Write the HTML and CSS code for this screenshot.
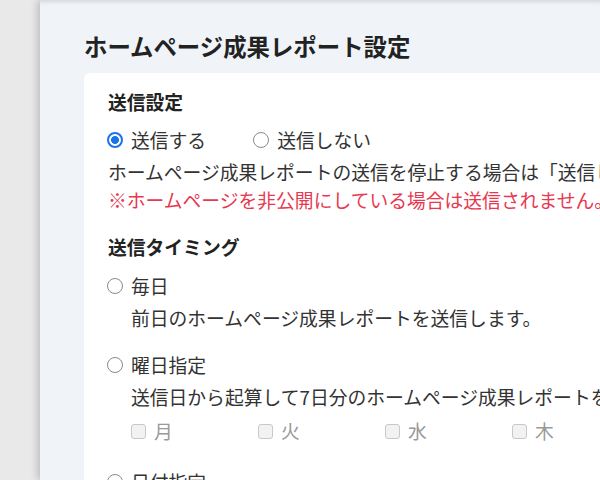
FILE: index.html
```html
<!DOCTYPE html>
<html lang="ja">
<head>
    <meta charset="UTF-8">
    <meta name="viewport" content="width=device-width, initial-scale=1.0">
    <title>ホームページ成果レポート設定</title>
    <link rel="stylesheet" href="styles.css">
</head>
<body>
    <div class="side"></div>
    <main class="main">
        <h1 class="page-title">ホームページ成果レポート設定</h1>
        <section class="card">
            <div class="group">
                <div class="group-title">送信設定</div>
                <div class="radio-row">
                    <label class="radio"><input type="radio" name="send" checked> 送信する</label>
                    <label class="radio"><input type="radio" name="send"> 送信しない</label>
                </div>
                <p class="note">ホームページ成果レポートの送信を停止する場合は「送信しない」を選択してください。</p>
                <p class="note warn">※ホームページを非公開にしている場合は送信されません。</p>
            </div>

            <div class="group timing">
                <div class="group-title">送信タイミング</div>
                <div class="option">
                    <label class="radio"><input type="radio" name="timing"> 毎日</label>
                    <p class="desc">前日のホームページ成果レポートを送信します。</p>
                </div>
                <div class="option">
                    <label class="radio"><input type="radio" name="timing"> 曜日指定</label>
                    <p class="desc">送信日から起算して7日分のホームページ成果レポートを送信します。</p>
                    <div class="days">
                        <label class="day"><input type="checkbox" disabled> 月</label>
                        <label class="day"><input type="checkbox" disabled> 火</label>
                        <label class="day"><input type="checkbox" disabled> 水</label>
                        <label class="day"><input type="checkbox" disabled> 木</label>
                        <label class="day"><input type="checkbox" disabled> 金</label>
                    </div>
                </div>
                <div class="option">
                    <label class="radio"><input type="radio" name="timing"> 日付指定</label>
                </div>
            </div>
        </section>
    </main>
</body>
</html>
```

FILE: styles.css
```css
body {
    font-family: "Noto Sans CJK JP", "Noto Sans", sans-serif;
    margin: 0;
    padding: 0;
    background-color: #e9e9e9;
    color: #333;
    display: flex;
    height: 480px;
    overflow: hidden;
    white-space: nowrap;
}

.side {
    width: 40px;
    flex-shrink: 0;
}

.main {
    flex: 1;
    min-width: 0;
    background: #f0f4f8;
    padding-top: 30px;
    box-shadow: -3px 0 7px rgba(0, 0, 0, 0.18), inset 0 5px 4px -3px rgba(0, 0, 0, 0.12);
    overflow: hidden;
}

.page-title {
    margin: 0 0 0 44px;
    font-size: 23.4px;
    line-height: 32px;
    font-weight: bold;
    color: #222;
}

.card {
    margin: 11px 0 0 44px;
    padding: 15px 0 0 24px;
    background: #fff;
    border-radius: 6px 0 0 0;
    height: 420px;
    font-size: 18.8px;
    line-height: 28px;
}

.group-title {
    font-weight: bold;
    color: #222;
}

.radio-row {
    display: flex;
    margin-top: 10px;
}

.radio {
    display: flex;
    align-items: center;
    margin-right: 48px;
}

.radio input {
    appearance: none;
    box-sizing: border-box;
    flex: none;
    width: 16px;
    height: 16px;
    margin: 0 8px 0 -1px;
    border: 1.5px solid #8a8a8a;
    border-radius: 50%;
    background: #fff;
}

.radio input:checked {
    border: 2px solid #1a73e8;
    background: radial-gradient(circle, #1a73e8 0 3.6px, #fff 4.3px);
}

.note {
    margin: 4px 0 0;
}

.note.warn {
    margin-top: 0;
    color: #e8384f;
}

.timing {
    margin-top: 19px;
}

.option {
    margin-top: 11px;
}

.option + .option {
    margin-top: 19px;
}

.desc {
    margin: 4px 0 0 23px;
}

.days {
    display: flex;
    margin: 6px 0 0 23px;
}

.day {
    display: flex;
    align-items: center;
    width: 127px;
    flex-shrink: 0;
    color: #999;
}

.day input {
    appearance: none;
    box-sizing: border-box;
    flex: none;
    width: 15px;
    height: 15px;
    margin: 0 8px 0 0;
    border: 1px solid #c8c8c8;
    border-radius: 3px;
    background: #f2f2f2;
}

.option:last-child {
    margin-top: 23px;
}
```
